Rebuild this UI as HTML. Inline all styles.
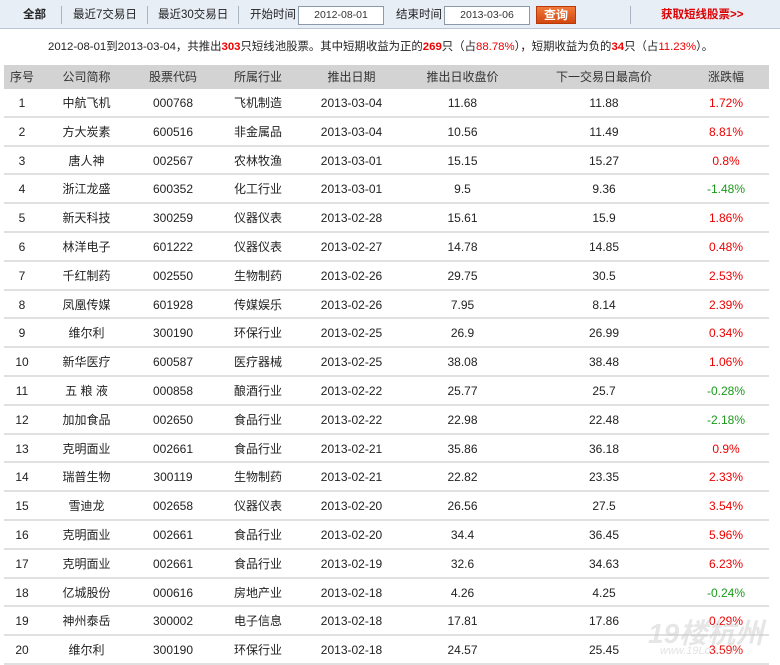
<!DOCTYPE html>
<html><head><meta charset="utf-8"><style>
*{margin:0;padding:0;box-sizing:border-box}
body{width:780px;height:661px;overflow:hidden;background:#fff;font-family:"Liberation Sans","Noto Sans CJK SC",sans-serif;font-size:12px;color:#222;position:relative}
.bar{position:absolute;left:0;top:0;width:780px;height:29px;background:#e8eef6;border-bottom:1px solid #b9c6d6}
.bar span{position:absolute;top:7px;line-height:16px;white-space:nowrap;font-size:11.5px}
.sep{position:absolute;top:6px;width:1px;height:18px;background:#aab4c0}
.inp{position:absolute;top:6px;height:19px;width:86px;background:#fff;border:1px solid #8a9aaa;font-size:10.5px;text-align:center;line-height:17px;color:#333}
.btn{position:absolute;left:536px;top:6px;width:40px;height:18px;background:linear-gradient(#f07a3a,#d24810);border:1px solid #b83a08;color:#fff;font-weight:bold;text-align:center;line-height:16px;font-size:12px}
.sum{position:absolute;left:48px;top:39px;white-space:nowrap;line-height:16px;font-size:11.4px}
.r{color:#e00}.rb{color:#e00;font-weight:bold}
.tbl{position:absolute;left:4px;top:65px;width:765px}
.row{display:flex;height:28.8px;line-height:28px;border-bottom:2px solid #e0e0e0}
.hd{height:24px;line-height:24px;background:#d3d3d3;border:none;color:#333}
.row div{text-align:center;flex:none}
.c1{width:36px}.c2{width:93px}.c3{width:80px}.c4{width:90px}.c5{width:97px}.c6{width:125px}.c7{width:158px}.c8{width:86px}
.up{color:#e00}.dn{color:#1a9a1a}
.wm{position:absolute;left:648px;top:612px;font-size:28px;font-style:italic;color:rgba(200,200,200,.45);font-weight:bold;white-space:nowrap}
.wm2{position:absolute;left:660px;top:645px;font-size:11px;font-style:italic;color:rgba(200,200,200,.5);white-space:nowrap}
</style></head><body>
<div class="bar">
<span style="left:23px;font-weight:bold">全部</span><div class="sep" style="left:61px"></div>
<span style="left:73px">最近7交易日</span><div class="sep" style="left:147px"></div>
<span style="left:158px">最近30交易日</span><div class="sep" style="left:238px"></div>
<span style="left:250px">开始时间</span><div class="inp" style="left:298px">2012-08-01</div>
<span style="left:396px">结束时间</span><div class="inp" style="left:444px">2013-03-06</div>
<div class="btn">查询</div><div class="sep" style="left:630px"></div>
<span style="left:661px;color:#d00;font-weight:bold">获取短线股票&gt;&gt;</span>
</div>
<div class="sum">2012-08-01到2013-03-04，共推出<span class="rb">303</span>只短线池股票。其中短期收益为正的<span class="rb">269</span>只（占<span class="r">88.78%</span>），短期收益为负的<span class="rb">34</span>只（占<span class="r">11.23%</span>）。</div>
<div class="tbl">
<div class="row hd"><div class="c1">序号</div><div class="c2">公司简称</div><div class="c3">股票代码</div><div class="c4">所属行业</div><div class="c5">推出日期</div><div class="c6">推出日收盘价</div><div class="c7">下一交易日最高价</div><div class="c8">涨跌幅</div></div>
<div class="row"><div class="c1">1</div><div class="c2">中航飞机</div><div class="c3">000768</div><div class="c4">飞机制造</div><div class="c5">2013-03-04</div><div class="c6">11.68</div><div class="c7">11.88</div><div class="c8 up">1.72%</div></div>
<div class="row"><div class="c1">2</div><div class="c2">方大炭素</div><div class="c3">600516</div><div class="c4">非金属品</div><div class="c5">2013-03-04</div><div class="c6">10.56</div><div class="c7">11.49</div><div class="c8 up">8.81%</div></div>
<div class="row"><div class="c1">3</div><div class="c2">唐人神</div><div class="c3">002567</div><div class="c4">农林牧渔</div><div class="c5">2013-03-01</div><div class="c6">15.15</div><div class="c7">15.27</div><div class="c8 up">0.8%</div></div>
<div class="row"><div class="c1">4</div><div class="c2">浙江龙盛</div><div class="c3">600352</div><div class="c4">化工行业</div><div class="c5">2013-03-01</div><div class="c6">9.5</div><div class="c7">9.36</div><div class="c8 dn">-1.48%</div></div>
<div class="row"><div class="c1">5</div><div class="c2">新天科技</div><div class="c3">300259</div><div class="c4">仪器仪表</div><div class="c5">2013-02-28</div><div class="c6">15.61</div><div class="c7">15.9</div><div class="c8 up">1.86%</div></div>
<div class="row"><div class="c1">6</div><div class="c2">林洋电子</div><div class="c3">601222</div><div class="c4">仪器仪表</div><div class="c5">2013-02-27</div><div class="c6">14.78</div><div class="c7">14.85</div><div class="c8 up">0.48%</div></div>
<div class="row"><div class="c1">7</div><div class="c2">千红制药</div><div class="c3">002550</div><div class="c4">生物制药</div><div class="c5">2013-02-26</div><div class="c6">29.75</div><div class="c7">30.5</div><div class="c8 up">2.53%</div></div>
<div class="row"><div class="c1">8</div><div class="c2">凤凰传媒</div><div class="c3">601928</div><div class="c4">传媒娱乐</div><div class="c5">2013-02-26</div><div class="c6">7.95</div><div class="c7">8.14</div><div class="c8 up">2.39%</div></div>
<div class="row"><div class="c1">9</div><div class="c2">维尔利</div><div class="c3">300190</div><div class="c4">环保行业</div><div class="c5">2013-02-25</div><div class="c6">26.9</div><div class="c7">26.99</div><div class="c8 up">0.34%</div></div>
<div class="row"><div class="c1">10</div><div class="c2">新华医疗</div><div class="c3">600587</div><div class="c4">医疗器械</div><div class="c5">2013-02-25</div><div class="c6">38.08</div><div class="c7">38.48</div><div class="c8 up">1.06%</div></div>
<div class="row"><div class="c1">11</div><div class="c2">五 粮 液</div><div class="c3">000858</div><div class="c4">酿酒行业</div><div class="c5">2013-02-22</div><div class="c6">25.77</div><div class="c7">25.7</div><div class="c8 dn">-0.28%</div></div>
<div class="row"><div class="c1">12</div><div class="c2">加加食品</div><div class="c3">002650</div><div class="c4">食品行业</div><div class="c5">2013-02-22</div><div class="c6">22.98</div><div class="c7">22.48</div><div class="c8 dn">-2.18%</div></div>
<div class="row"><div class="c1">13</div><div class="c2">克明面业</div><div class="c3">002661</div><div class="c4">食品行业</div><div class="c5">2013-02-21</div><div class="c6">35.86</div><div class="c7">36.18</div><div class="c8 up">0.9%</div></div>
<div class="row"><div class="c1">14</div><div class="c2">瑞普生物</div><div class="c3">300119</div><div class="c4">生物制药</div><div class="c5">2013-02-21</div><div class="c6">22.82</div><div class="c7">23.35</div><div class="c8 up">2.33%</div></div>
<div class="row"><div class="c1">15</div><div class="c2">雪迪龙</div><div class="c3">002658</div><div class="c4">仪器仪表</div><div class="c5">2013-02-20</div><div class="c6">26.56</div><div class="c7">27.5</div><div class="c8 up">3.54%</div></div>
<div class="row"><div class="c1">16</div><div class="c2">克明面业</div><div class="c3">002661</div><div class="c4">食品行业</div><div class="c5">2013-02-20</div><div class="c6">34.4</div><div class="c7">36.45</div><div class="c8 up">5.96%</div></div>
<div class="row"><div class="c1">17</div><div class="c2">克明面业</div><div class="c3">002661</div><div class="c4">食品行业</div><div class="c5">2013-02-19</div><div class="c6">32.6</div><div class="c7">34.63</div><div class="c8 up">6.23%</div></div>
<div class="row"><div class="c1">18</div><div class="c2">亿城股份</div><div class="c3">000616</div><div class="c4">房地产业</div><div class="c5">2013-02-18</div><div class="c6">4.26</div><div class="c7">4.25</div><div class="c8 dn">-0.24%</div></div>
<div class="row"><div class="c1">19</div><div class="c2">神州泰岳</div><div class="c3">300002</div><div class="c4">电子信息</div><div class="c5">2013-02-18</div><div class="c6">17.81</div><div class="c7">17.86</div><div class="c8 up">0.29%</div></div>
<div class="row"><div class="c1">20</div><div class="c2">维尔利</div><div class="c3">300190</div><div class="c4">环保行业</div><div class="c5">2013-02-18</div><div class="c6">24.57</div><div class="c7">25.45</div><div class="c8 up">3.59%</div></div>
</div>
<div class="wm">19楼杭州</div>
<div class="wm2">www.19Lou.com</div>
</body></html>
